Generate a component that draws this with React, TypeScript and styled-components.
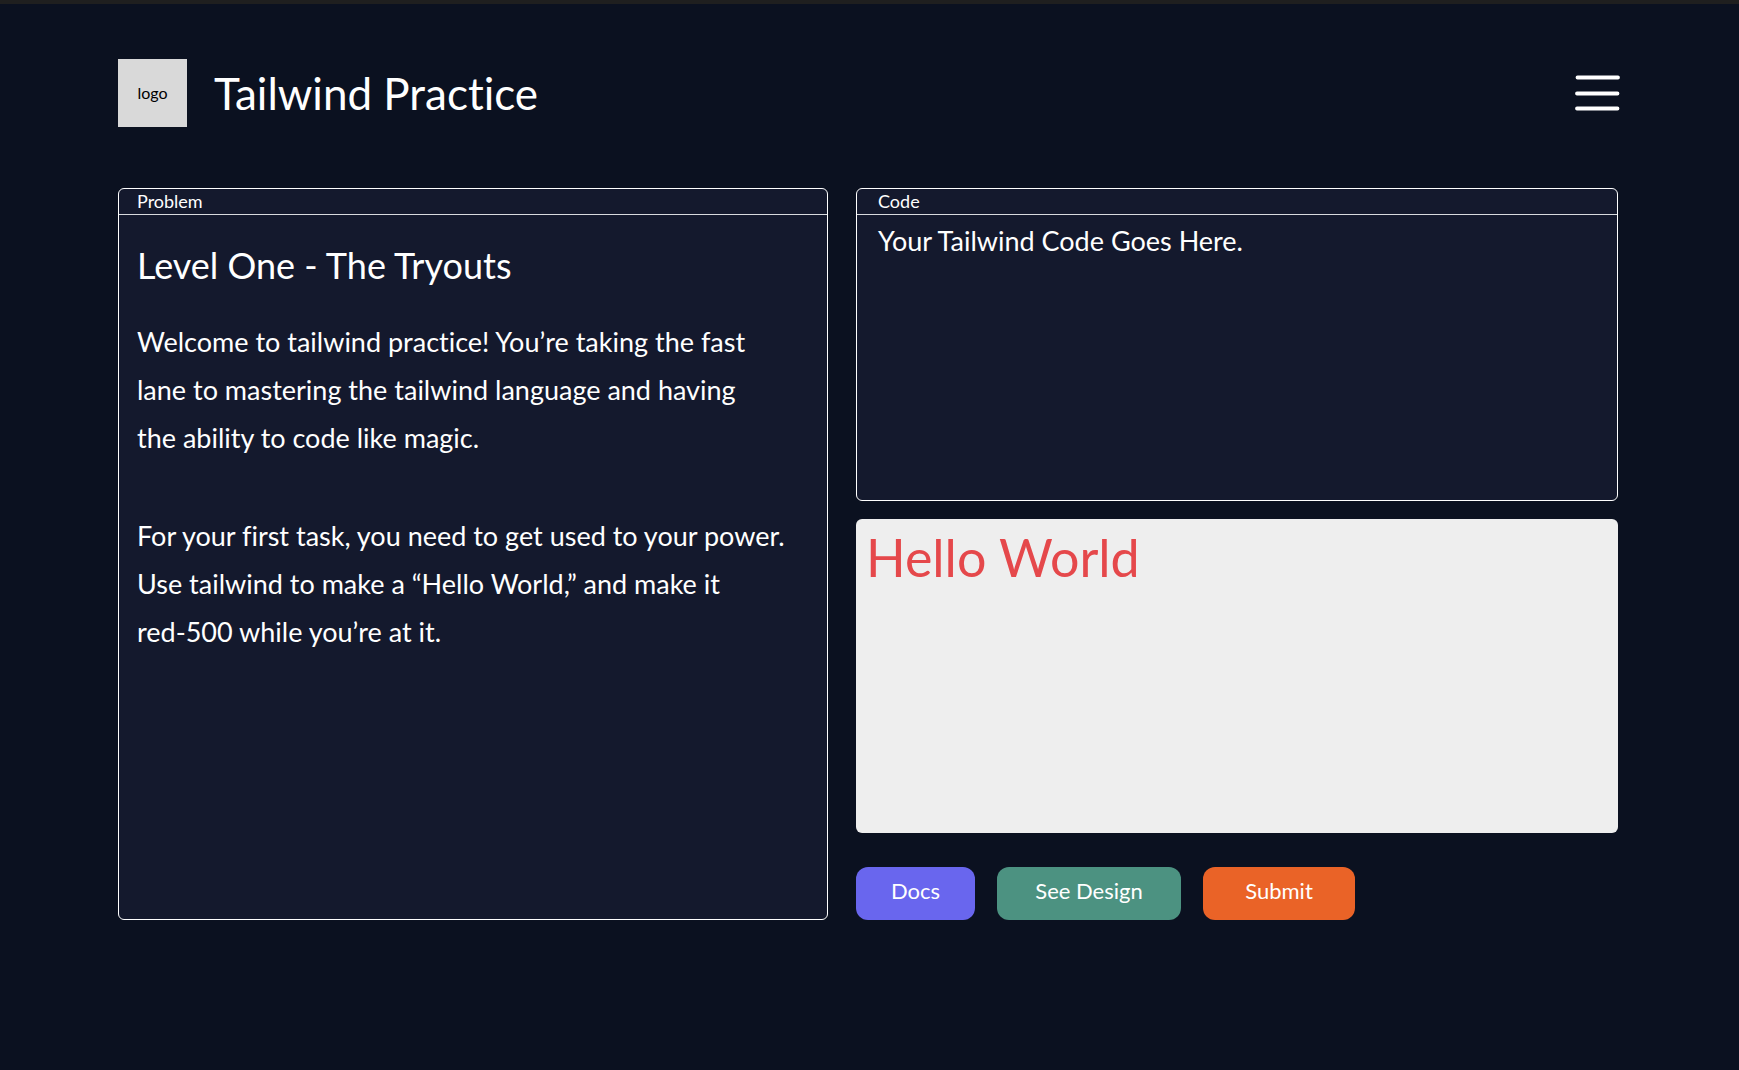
import React from "react";
import styled, { createGlobalStyle } from "styled-components";

const GlobalStyle = createGlobalStyle`
  *, *::before, *::after { box-sizing: border-box; }
  body {
    margin: 0;
    background: #0b1120;
    color: #fff;
    font-family: Lato, "Open Sans", sans-serif;
    font-variant-ligatures: none;
  }
`;

const Page = styled.div`
  min-height: 100vh;
  padding: 55px 119px 64px 118px;
  border-top: 4px solid #1f1f1f;
`;

const Header = styled.header`
  display: flex;
  align-items: center;
  gap: 27px;
  margin-bottom: 61px;
`;

const Logo = styled.a`
  display: grid;
  place-items: center;
  width: 69px;
  height: 68px;
  background: #d9d9d9;
  color: #000;
  font-size: 16px;
  line-height: 20px;
  text-decoration: none;
`;

const SiteTitle = styled.h1`
  flex: 1;
  margin: 0;
  font-size: 44px;
  font-weight: 400;
  line-height: 68px;
`;

const MenuButton = styled.button`
  display: flex;
  padding: 0;
  border: 0;
  background: none;
  color: #fff;
  cursor: pointer;
`;

const Workspace = styled.main`
  display: grid;
  grid-template-columns: 710fr 762fr;
  gap: 28px;
  margin-right: 2px;
`;

const Panel = styled.section`
  display: flex;
  flex-direction: column;
  min-width: 0;
  border: 1px solid #fff;
  border-radius: 6px;
  background: #14192d;
  overflow: hidden;
`;

const PanelLabel = styled.label<{ $inset: number }>`
  display: block;
  padding: 0 ${(p) => p.$inset}px;
  border-bottom: 1px solid #d8dade;
  font-size: 18px;
  line-height: 25px;
`;

const Problem = styled.article`
  padding: 24px 18px;
`;

const ProblemTitle = styled.h2`
  margin: 0 0 27px;
  font-size: 36px;
  font-weight: 400;
  line-height: 52px;
`;

const ProblemText = styled.p`
  margin: 0 0 50px;
  font-size: 27px;
  line-height: 48px;
`;

const Editor = styled.div`
  display: grid;
  grid-template-rows: 313px 314px auto;
  gap: 18px;
  min-width: 0;
`;

const CodeInput = styled.textarea`
  flex: 1;
  width: 100%;
  padding: 6px 21px;
  border: 0;
  outline: 0;
  resize: none;
  background: transparent;
  color: #fff;
  font-family: inherit;
  font-size: 27px;
  font-variant-ligatures: inherit;
  line-height: 40px;
`;

const Preview = styled.section`
  padding: 2px 10px;
  border-radius: 6px;
  background: #eee;
`;

const PreviewText = styled.p`
  margin: 0;
  color: #e5484b;
  font-size: 52px;
  line-height: 72px;
`;

const Actions = styled.div`
  display: flex;
  gap: 22px;
  padding-top: 16px;
`;

const ActionButton = styled.button<{ $color: string; $width: number }>`
  width: ${(p) => p.$width}px;
  height: 53px;
  padding: 0 0 6px;
  border: 0;
  border-radius: 12px;
  background: ${(p) => p.$color};
  color: #fff;
  font-family: inherit;
  font-size: 22px;
  line-height: 28px;
  cursor: pointer;
`;

const actions = [
  { name: "Docs", color: "#6966ee", width: 119 },
  { name: "See Design", color: "#4c9281", width: 184 },
  { name: "Submit", color: "#ea6327", width: 152 },
];

export default function App() {
  return (
    <>
      <GlobalStyle />
      <Page>
        <Header>
          <Logo href="#">logo</Logo>
          <SiteTitle>Tailwind Practice</SiteTitle>
          <MenuButton type="button" aria-label="Menu">
            <svg width="46" height="38" viewBox="0 0 46 38" fill="none" stroke="currentColor" strokeWidth="3.8" strokeLinecap="round">
              <path d="M3.5 3.5H44M3 19.5H43.5M3 34.5H43.5" />
            </svg>
          </MenuButton>
        </Header>
        <Workspace>
          <Panel>
            <PanelLabel as="div" $inset={18}>Problem</PanelLabel>
            <Problem>
              <ProblemTitle>Level One - The Tryouts</ProblemTitle>
              <ProblemText>
                Welcome to tailwind practice! You’re taking the fast
                <br />
                lane to mastering the tailwind language and having
                <br />
                the ability to code like magic.
              </ProblemText>
              <ProblemText>
                For your first task, you need to get used to your power.
                <br />
                Use tailwind to make a “Hello World,” and make it
                <br />
                red-500 while you’re at it.
              </ProblemText>
            </Problem>
          </Panel>
          <Editor>
            <Panel>
              <PanelLabel htmlFor="code" $inset={21}>Code</PanelLabel>
              <CodeInput id="code" spellCheck={false} defaultValue="Your Tailwind Code Goes Here." />
            </Panel>
            <Preview aria-label="Preview">
              <PreviewText>Hello World</PreviewText>
            </Preview>
            <Actions>
              {actions.map((a) => (
                <ActionButton key={a.name} type="button" $color={a.color} $width={a.width}>
                  {a.name}
                </ActionButton>
              ))}
            </Actions>
          </Editor>
        </Workspace>
      </Page>
    </>
  );
}
